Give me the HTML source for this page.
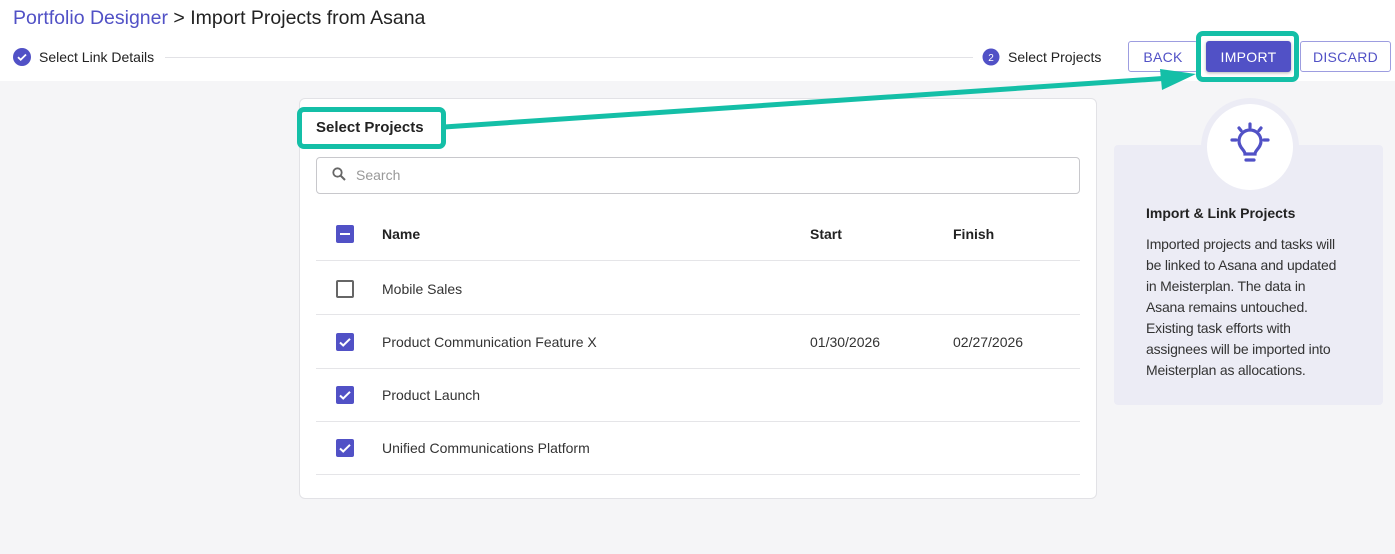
<!DOCTYPE html>
<html><head><meta charset="utf-8"><style>
*{box-sizing:border-box;margin:0;padding:0}
body{width:1395px;height:554px;background:#f5f5f7;font-family:"Liberation Sans",Arial,sans-serif;color:#222;position:relative;overflow:hidden}
.top{position:absolute;left:0;top:0;width:1395px;height:81px;background:#fff}
.abs{position:absolute}
.title{left:13px;top:7px;font-size:19.5px;white-space:nowrap}
.title .p{color:#5151c6}
.step{font-size:14px;white-space:nowrap}
.btn{position:absolute;top:41px;height:31px;border:1px solid #9d9de0;border-radius:3px;background:#fff;color:#5151c6;font-size:14px;display:flex;align-items:center;justify-content:center;letter-spacing:.3px}
.card{left:299px;top:98px;width:798px;height:401px;background:#fff;border:1px solid #e2e2e6;border-radius:6px}
.row{position:absolute;left:316px;width:764px;border-bottom:1px solid #e5e5e8;height:53px;font-size:14px;color:#333}
.row span{position:absolute;top:50%;transform:translateY(-50%);white-space:nowrap}
.cb{position:absolute;left:20px;top:50%;margin-top:-9px;width:18px;height:18px;border-radius:2px;background:#5151c6}
.cb.off{background:#fff;border:2px solid #666}
.info{left:1114px;top:145px;width:269px;height:260px;background:#ececf5;border-radius:4px}
</style></head><body>
<div class="top"></div>
<div class="abs title"><span class="p">Portfolio Designer</span> &gt; Import Projects from Asana</div>
<svg class="abs" style="left:13px;top:48px" width="18" height="18"><circle cx="9" cy="9" r="9" fill="#5151c6"/><path d="M5 9.2l2.7 2.6L13 6.5" stroke="#fff" stroke-width="1.8" fill="none"/></svg>
<div class="abs step" style="left:39px;top:49px">Select Link Details</div>
<div class="abs" style="left:165px;top:57px;width:808px;height:1px;background:#e2e2e6"></div>
<svg class="abs" style="left:982px;top:48px" width="18" height="18"><circle cx="9" cy="9" r="8.5" fill="#5151c6"/><text x="9" y="13" font-size="10" fill="#fff" text-anchor="middle" font-family="Liberation Sans">2</text></svg>
<div class="abs step" style="left:1008px;top:49px">Select Projects</div>
<div class="btn" style="left:1128px;width:70px">BACK</div>
<div class="btn" style="left:1300px;width:91px">DISCARD</div>
<div class="abs" style="left:1196px;top:31px;width:103px;height:51px;border:5px solid #14bfa7;border-radius:7px;background:#fff"></div>
<div class="btn" style="left:1206px;top:41px;width:85px;background:#5151c6;border-color:#5151c6;color:#fff;box-shadow:0 1px 3px rgba(0,0,0,.3)">IMPORT</div>

<div class="abs card"></div>
<div class="abs" style="left:297px;top:107px;width:149px;height:42px;border:5px solid #14bfa7;border-radius:7px;background:#fff"></div>
<div class="abs" style="left:316px;top:119px;font-size:15px;font-weight:bold;color:#222">Select Projects</div>
<svg class="abs" style="left:0;top:0" width="1395" height="554"><line x1="444" y1="127" x2="1170" y2="78" stroke="#14bfa7" stroke-width="5"/><polygon points="1160,69 1196,74 1162,90" fill="#14bfa7"/></svg>

<div class="abs" style="left:316px;top:157px;width:764px;height:37px;border:1px solid #c8c8cc;border-radius:4px"></div>
<svg class="abs" style="left:332px;top:167px" width="14" height="14"><circle cx="5.5" cy="5.5" r="4.2" stroke="#666" stroke-width="1.8" fill="none"/><path d="M8.5 8.5L13 13" stroke="#666" stroke-width="2"/></svg>
<div class="abs" style="left:356px;top:167px;font-size:14px;color:#999">Search</div>

<div class="row" style="top:208px"><div class="cb"><div style="position:absolute;left:4px;top:8px;width:10px;height:2px;background:#fff"></div></div><span style="left:66px;font-weight:bold;color:#222">Name</span><span style="left:494px;font-weight:bold;color:#222">Start</span><span style="left:637px;font-weight:bold;color:#222">Finish</span></div>
<div class="row" style="top:263px;height:52px"><div class="cb off"></div><span style="left:66px">Mobile Sales</span></div>
<div class="row" style="top:316px"><div class="cb"><svg width="18" height="18"><path d="M4 9.5l3.2 3L14 5.8" stroke="#fff" stroke-width="2" fill="none"/></svg></div><span style="left:66px">Product Communication Feature X</span><span style="left:494px">01/30/2026</span><span style="left:637px">02/27/2026</span></div>
<div class="row" style="top:369px"><div class="cb"><svg width="18" height="18"><path d="M4 9.5l3.2 3L14 5.8" stroke="#fff" stroke-width="2" fill="none"/></svg></div><span style="left:66px">Product Launch</span></div>
<div class="row" style="top:422px"><div class="cb"><svg width="18" height="18"><path d="M4 9.5l3.2 3L14 5.8" stroke="#fff" stroke-width="2" fill="none"/></svg></div><span style="left:66px">Unified Communications Platform</span></div>

<div class="abs info"></div>
<div class="abs" style="left:1201px;top:98px;width:98px;height:98px;border-radius:50%;background:#ececf5"></div>
<div class="abs" style="left:1207px;top:104px;width:86px;height:86px;border-radius:50%;background:#fff"></div>
<svg class="abs" style="left:1226px;top:121px" width="48" height="48" viewBox="0 0 48 48"><g stroke="#5151c6" stroke-width="3.2" stroke-linecap="round" fill="none"><path d="M24 3v3.5M13 7l2 2.5M35 7l-2 2.5M6 19h4M38 19h4"/><path d="M19 33c0-4-6-6-6-13a11 11 0 0 1 22 0c0 7-6 9-6 13z"/><path d="M20 39h8"/></g></svg>
<div class="abs" style="left:1146px;top:205px;font-size:14px;font-weight:bold;color:#222">Import &amp; Link Projects</div>
<div class="abs" style="left:1146px;top:234px;font-size:14px;line-height:21px;color:#333;white-space:nowrap;letter-spacing:-0.2px">Imported projects and tasks will<br>be linked to Asana and updated<br>in Meisterplan. The data in<br>Asana remains untouched.<br>Existing task efforts with<br>assignees will be imported into<br>Meisterplan as allocations.</div>
</body></html>
